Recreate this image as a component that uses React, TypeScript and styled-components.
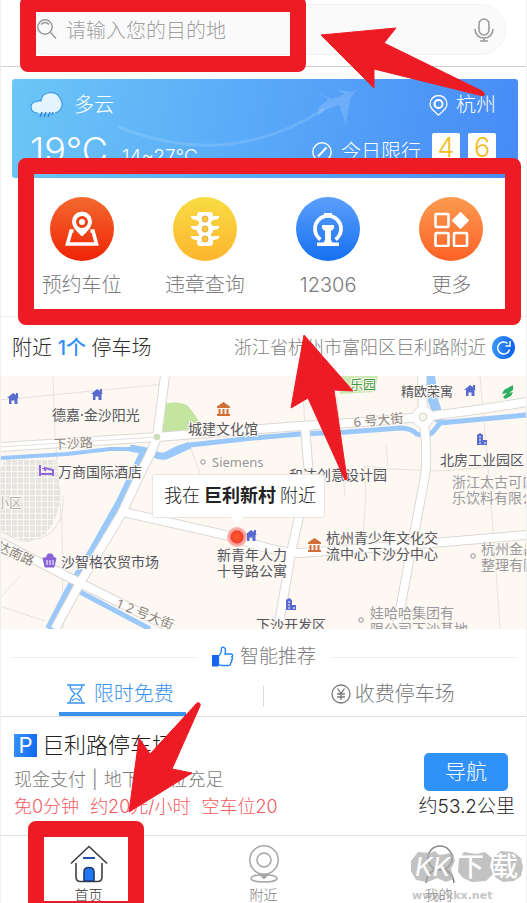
import React from "react";
import styled, { createGlobalStyle } from "styled-components";

const GlobalStyle = createGlobalStyle`
  * { box-sizing: border-box; }
  body {
    margin: 0;
    background: #fff;
    font-family: Inter, "Noto Sans CJK SC", sans-serif;
    font-weight: 300;
    color: #2b2b2b;
  }
  button, input { font: inherit; color: inherit; }
  button { border: 0; background: none; padding: 0; cursor: pointer; }
  a { color: inherit; text-decoration: none; }
  svg { display: block; flex: none; }
`;

const Page = styled.div`
  position: relative;
  overflow: hidden;
  background: #fff;
  border-left: 1px solid #efefef;
  border-right: 1px solid #efefef;
`;

/* ---------- search ---------- */

const SearchHeader = styled.header`
  padding: 4px 20px 11px;
  border-bottom: 1px solid #cfcdd0;
`;

const SearchBox = styled.label`
  display: flex;
  align-items: center;
  height: 51px;
  padding: 0 11px 0 15px;
  gap: 9px;
  border: 1px solid #f2f2f2;
  border-radius: 26px;
  background: #fafafa;
`;

const SearchInput = styled.input`
  flex: 1;
  min-width: 0;
  border: 0;
  outline: 0;
  padding: 2px 0 0;
  background: transparent;
  font-size: 20px;
  line-height: 28px;
  &::placeholder { color: #a0a0a0; opacity: 1; }
`;

/* ---------- weather ---------- */

const WeatherCard = styled.section`
  position: relative;
  overflow: hidden;
  margin: 12px 8px 0 11px;
  height: 99px;
  padding: 10px 22px 0 18px;
  border-radius: 3px;
  color: #fff;
  background: linear-gradient(100deg, #6cc6f6 0%, #5aabf8 45%, #478bf6 100%);
`;

const WeatherArt = styled.svg`
  position: absolute;
  top: 0;
  right: 0;
`;

const WeatherRow = styled.div<{ $tall?: boolean }>`
  position: relative;
  display: flex;
  align-items: ${(p) => (p.$tall ? "flex-start" : "center")};
  justify-content: space-between;
  height: ${(p) => (p.$tall ? 46 : 32)}px;
  margin-top: ${(p) => (p.$tall ? 10 : 0)}px;
`;

const WeatherGroup = styled.div<{ $gap: number }>`
  display: flex;
  align-items: center;
  gap: ${(p) => p.$gap}px;
  font-size: 20px;
  line-height: 32px;
`;

const Temperature = styled.div`
  display: flex;
  align-items: baseline;
  gap: 14px;
  font-size: 36px;
  line-height: 38px;
`;

const TemperatureRange = styled.span`
  font-size: 19px;
`;

const LimitGroup = styled.div`
  display: flex;
  gap: 8px;
  align-items: flex-start;
`;

const LimitLabel = styled.div`
  display: flex;
  align-items: center;
  gap: 9px;
  margin-right: 3px;
  padding-top: 5px;
  font-size: 20px;
  line-height: 32px;
`;

const LimitDigit = styled.span`
  width: 28px;
  height: 34px;
  margin-top: 2px;
  border-radius: 2px;
  background: #fff;
  color: #f2bd24;
  font-size: 27px;
  line-height: 29px;
  text-align: center;
`;

/* ---------- quick actions ---------- */

const QuickActions = styled.nav`
  display: grid;
  grid-template-columns: repeat(4, 1fr);
  padding: 19px 13px 17px 19px;
  border-bottom: 1px dotted #e4e4e4;
`;

const QuickAction = styled.button`
  display: flex;
  flex-direction: column;
  align-items: center;
  gap: 10px;
  color: #7c7c7c;
  font-size: 20px;
  line-height: 28px;
`;

const ActionDisc = styled.span<{ $from: string; $to: string }>`
  display: grid;
  place-items: center;
  width: 64px;
  height: 64px;
  border-radius: 50%;
  background: linear-gradient(${(p) => p.$from}, ${(p) => p.$to});
`;

/* ---------- nearby ---------- */

const NearbyBar = styled.div`
  display: flex;
  align-items: center;
  justify-content: space-between;
  height: 59px;
  padding: 2px 11px 0 11px;
`;

const NearbyCount = styled.h2`
  margin: 0;
  font-size: 20px;
  font-weight: 300;
  line-height: 28px;
  em { font-style: normal; font-weight: 500; color: #2f8ef5; }
`;

const Address = styled.div`
  display: flex;
  align-items: center;
  gap: 6px;
  color: #808080;
  font-size: 18px;
  line-height: 28px;
`;

const RefreshButton = styled.button`
  display: grid;
  place-items: center;
  width: 23px;
  height: 23px;
  border-radius: 50%;
  color: #fff;
  background: linear-gradient(100deg, #3c9bf8, #0a5cf0);
`;

/* ---------- map ---------- */

const MapPane = styled.section`
  position: relative;
  height: 253px;
  overflow: hidden;
  background: #fdf8f2;
`;

const MapSvg = styled.svg`
  width: 100%;
  height: 100%;
`;

const MapText = styled.text<{ $tone?: string; $small?: boolean }>`
  font-family: "Noto Sans", "Noto Sans CJK SC", sans-serif;
  font-size: ${(p) => (p.$small ? 13 : 14)}px;
  font-weight: 400;
  fill: ${(p) => p.$tone ?? "#55555d"};
  stroke: #fdf8f2;
  stroke-width: 2px;
  paint-order: stroke;
`;

const LocationBubble = styled.div`
  position: absolute;
  left: 151px;
  top: 98px;
  display: flex;
  gap: 4px;
  padding: 7px 8px 7px 11px;
  border-radius: 3px;
  background: #fff;
  border: 1px solid #e9e6e2;
  color: #222;
  font-size: 18px;
  line-height: 28px;
  white-space: nowrap;
  b { font-weight: 700; }
  &::after {
    content: "";
    position: absolute;
    left: 77px;
    bottom: -6px;
    border: 7px solid transparent;
    border-top-color: #fff;
    border-bottom: 0;
  }
`;

/* ---------- recommendation ---------- */

const SectionHeading = styled.div`
  display: flex;
  align-items: center;
  justify-content: center;
  padding: 14px 11px 5px 11px;
  gap: 16px;
  &::before, &::after {
    content: "";
    flex: 1;
    height: 1px;
    background: #ececec;
  }
`;

const HeadingText = styled.h3`
  display: flex;
  align-items: center;
  gap: 6px;
  margin: 0;
  color: #7a7a7a;
  font-size: 19px;
  font-weight: 300;
  line-height: 28px;
`;

const Tabs = styled.div`
  display: grid;
  grid-template-columns: 1fr 1fr;
  height: 41px;
  border-bottom: 1px solid #dedede;
`;

const TabCell = styled.div<{ $divided?: boolean }>`
  position: relative;
  display: flex;
  justify-content: center;
  padding-right: ${(p) => (p.$divided ? 20 : 0)}px;
  &::after {
    content: "";
    display: ${(p) => (p.$divided ? "block" : "none")};
    position: absolute;
    right: 0;
    top: 10px;
    width: 1px;
    height: 21px;
    background: #dcdcdc;
  }
`;

const Tab = styled.button<{ $active?: boolean }>`
  display: flex;
  align-items: center;
  gap: ${(p) => (p.$active ? 9 : 4)}px;
  height: 40px;
  padding: 0 12px 0 8px;
  border-bottom: 4px solid ${(p) => (p.$active ? "#3b93f0" : "transparent")};
  color: ${(p) => (p.$active ? "#3b93f0" : "#7a7a7a")};
  font-size: 20px;
  line-height: 28px;
`;

const Listing = styled.article`
  display: flex;
  align-items: flex-end;
  justify-content: space-between;
  padding: 13px 11px 14px 13px;
`;

const ListingTitle = styled.h3`
  display: flex;
  align-items: center;
  gap: 5px;
  margin: 0 0 7px;
  color: #222;
  font-size: 22px;
  font-weight: 300;
  line-height: 30px;
`;

const ParkingBadge = styled.span`
  width: 23px;
  height: 23px;
  background: linear-gradient(100deg, #3793f8, #0f66f2);
  color: #fff;
  font-size: 22px;
  font-weight: 400;
  line-height: 23px;
  text-align: center;
`;

const ListingMeta = styled.p`
  display: flex;
  gap: 6px;
  margin: 0;
  color: #7a7a7a;
  font-size: 18px;
  line-height: 26px;
`;

const ParkingKind = styled.span`
  display: flex;
  gap: 12px;
`;

const ListingPrice = styled.p`
  display: flex;
  gap: 11px;
  margin: 0;
  color: #f4595f;
  font-size: 18px;
  line-height: 28px;
`;

const ListingSide = styled.div`
  display: flex;
  flex-direction: column;
  align-items: flex-end;
  gap: 2px;
  font-size: 19px;
  line-height: 28px;
`;

const NavigateButton = styled.button`
  width: 84px;
  height: 38px;
  margin-right: 7px;
  border-radius: 5px;
  background: #3092f9;
  color: #fff;
  font-size: 21px;
  line-height: 28px;
`;

/* ---------- bottom bar ---------- */

const BottomBar = styled.nav`
  display: grid;
  grid-template-columns: repeat(3, 1fr);
  padding-top: 9px;
  border-top: 1px solid #e2e2e2;
`;

const BottomLink = styled.a<{ $active?: boolean }>`
  display: flex;
  flex-direction: column;
  align-items: center;
  gap: 4px;
  color: ${(p) => (p.$active ? "#333" : "#808080")};
  font-size: 14px;
  line-height: 16px;
`;

const Watermark = styled.div`
  position: absolute;
  right: 2px;
  bottom: 0;
  width: 114px;
  height: 54px;
`;

const WatermarkBlobs = styled.svg`
  position: absolute;
  left: 0;
  top: 0;
`;

const WatermarkName = styled.div`
  position: relative;
  display: flex;
  gap: 8px;
  padding-left: 5px;
  color: #fff;
  font-size: 26px;
  font-weight: 500;
  line-height: 36px;
  i { font-weight: 400; }
`;

const WatermarkUrl = styled.div`
  position: relative;
  padding: 4px 0 0 2px;
  color: rgba(170, 170, 170, 0.7);
  font-family: "DejaVu Sans", sans-serif;
  font-size: 11px;
  font-weight: 700;
  line-height: 14px;
`;

/* ---------- red annotations laid over the screen ---------- */

const Frame = styled.div<{ $x: number; $y: number; $w: number; $h: number }>`
  position: absolute;
  left: ${(p) => p.$x}px;
  top: ${(p) => p.$y}px;
  width: ${(p) => p.$w}px;
  height: ${(p) => p.$h}px;
  border: 16px solid #ed1c24;
  border-radius: 8px;
  pointer-events: none;
`;

const Arrows = styled.svg`
  position: absolute;
  left: -1px;
  top: 0;
  pointer-events: none;
`;

/* ---------- icons ---------- */

const SearchIcon = () => (
  <svg width="20" height="21" viewBox="0 0 20 21" fill="none" stroke="#999" strokeWidth="1.5">
    <circle cx="8" cy="8" r="7.2" />
    <path d="M4 5.5Q8 1.500 12 5.500M13.500 13.500L19 19.500" />
  </svg>
);

const MicIcon = () => (
  <svg width="20" height="24" viewBox="0 0 20 24" fill="none" stroke="#9b9b9b" strokeWidth="1.600">
    <rect x="5" y="1" width="10" height="16" rx="5" />
    <path d="M1 11c0 5.500 4 9 9 9s9-3.500 9-9M10 20v3M6 23h8" />
  </svg>
);

const CloudIcon = () => (
  <svg width="33" height="26" viewBox="0 0 33 26">
    <path d="M7 21C-1 20-1 10 7 9.500 9 8 10 9 11 9 12-1 26-2 30 6c5 8 0 15-7 15z" fill="#e4f5ff" stroke="#3f9be6" strokeWidth="1.200" />
    <path d="M8 20h17" stroke="#e4f5ff" strokeWidth="3" />
    <path d="M12 20l-2 5M16 20l-2 5M20 20l-2 5M23 20l-1 3" stroke="#2e86d8" strokeWidth="1.600" />
  </svg>
);

const CityPinIcon = () => (
  <svg width="19" height="21" viewBox="0 0 19 21" fill="none" stroke="#fff" strokeWidth="1.300">
    <path d="M9.500 20C6 17 1 14 1 9a8.500 8.500 0 0 1 17 0c0 5-5 8-8.500 11z" />
    <circle cx="9.500" cy="9" r="4" strokeWidth="2" />
  </svg>
);

const BanIcon = () => (
  <svg width="20" height="20" viewBox="0 0 20 20" fill="none" stroke="#fff" strokeWidth="1.400">
    <circle cx="10" cy="10" r="9.200" />
    <path d="M6 14.500L14.500 5.500" strokeWidth="2" />
  </svg>
);

const ReserveIcon = () => (
  <svg width="34" height="36" viewBox="0 0 34 36" fill="none">
    <path d="M8.500 20H6L2.500 33h29L28 20h-2.500" stroke="#fff" strokeWidth="3.600" />
    <path d="M17 26C13 22 6.500 17 6.500 10.500a10.500 10.500 0 0 1 21 0C27.500 17 21 22 17 26z" fill="#fff" stroke="#ee4414" />
    <circle cx="17" cy="11" r="4.500" fill="#fff" stroke="#ee4414" strokeWidth="3" />
  </svg>
);

const TrafficIcon = () => (
  <svg width="32" height="36" viewBox="0 0 32 36" fill="#fff">
    <path d="M10 1h12l2 2v6l-2 2v2l2 2v6l-2 2v2l2 2v6l-2 2H10l-2-2v-6l2-2v-2l-2-2v-6l2-2v-2L8 9V3z" />
    {[5, 15, 25].map((y) => (
      <path key={y} d={`M1.500 ${y}H30.500L29 ${y + 3}L23 ${y + 4.5}H9L3 ${y + 3}z`} />
    ))}
    {[8, 18, 28].map((y) => (
      <circle key={y} cx="16" cy={y} r="3" fill="#fccb45" stroke="#dfa92f" />
    ))}
  </svg>
);

const RailIcon = () => (
  <svg width="34" height="36" viewBox="0 0 34 36">
    <path d="M9.500 28.500A13 13 0 1 1 24.500 28.500" fill="none" stroke="#fff" strokeWidth="3.800" />
    <path d="M13 2h8v4h-8zM11 14h12v3.500L20 20v9l1.500 2.500H28V35H6v-3.500h6.500L14 29v-9l-3-2.500z" fill="#fff" />
  </svg>
);

const MoreIcon = () => (
  <svg width="36" height="36" viewBox="0 0 36 36" fill="none" stroke="#fff" strokeWidth="2.600">
    <rect x="2.500" y="3" width="13" height="13" rx="1" />
    <rect x="2.500" y="22" width="13" height="13" rx="1" />
    <rect x="21" y="22" width="13" height="13" rx="1" />
    <path d="M27.500 2.500l7 7-7 7-7-7z" fill="#fff" />
  </svg>
);

const RefreshIcon = () => (
  <svg width="16" height="16" viewBox="0 0 16 16" fill="none" stroke="#fff" strokeWidth="1.500">
    <path d="M13.500 9.500A6 6 0 1 1 11.500 3.300M14 1v5H9.500" />
  </svg>
);

const ThumbIcon = () => (
  <svg width="23" height="22" viewBox="0 0 23 22">
    <path d="M7.500 10c3-2 3-5 3-8 1-2 4-.5 4 2.500 0 1.500-.5 3-.5 3.500h6c2 0 2 2.500.8 3 1.200.8.8 2.600-.4 3 .8 1 .4 2.400-.8 2.800.5 1.400-.4 2.700-1.800 2.700H11c-1.500 0-2-.8-3.500-.8z" fill="#fff" stroke="#2383f4" strokeWidth="1.400" />
    <path d="M1 9h6.500v11.500H1z" fill="#1765ea" />
  </svg>
);

const HourglassIcon = () => (
  <svg width="18" height="20" viewBox="0 0 18 20" fill="none" stroke="#3b93f0" strokeWidth="1.400">
    <path d="M0 1h18M0 19h18M3 1c0 5 2.500 6.500 5 9-2.500 2.500-5 4-5 9M15 1c0 5-2.500 6.500-5 9 2.500 2.500 5 4 5 9" />
    <path d="M5 5h8M5 17c1-3 7-3 8 0" strokeWidth="1.200" />
  </svg>
);

const YenIcon = () => (
  <svg width="20" height="20" viewBox="0 0 20 20" fill="none" stroke="#7a7a7a" strokeWidth="1.300">
    <circle cx="10" cy="10" r="9" />
    <path d="M6.500 4.500L10 9.500l3.500-5M10 9.500V16M6 10h8M6 13h8" />
  </svg>
);

const HomeIcon = () => (
  <svg width="38" height="38" viewBox="0 0 38 38" fill="none" stroke="#3b3f45" strokeWidth="1.600">
    <path d="M1 18.500L19 1.500l18 17" />
    <path d="M6 18v14q0 4.500 4.500 4.500h17Q32 36.500 32 32V18" />
    <path d="M14 36V27q0-4.500 5-4.500t5 4.500v9z" fill="#2277f5" stroke="#223a70" />
    <path d="M13 13h12" stroke="#244ea8" strokeWidth="2" />
  </svg>
);

const NearIcon = () => (
  <svg width="32" height="38" viewBox="0 0 32 38" fill="none" stroke="#a5a5a5" strokeWidth="1.500">
    <circle cx="16" cy="15" r="14.200" />
    <circle cx="16" cy="15" r="7" />
    <path d="M12 30c-5 0-9 1.500-9 3.500S8 37 16 37s13-1.500 13-3.500-4-3.500-9-3.500" />
    <path d="M12 29.500h8l-4 4z" fill="#a5a5a5" />
  </svg>
);

const UserIcon = () => (
  <svg width="32" height="38" viewBox="0 0 32 38" fill="none" stroke="#858585" strokeWidth="1.500">
    <circle cx="17" cy="13" r="12" />
    <path d="M3 38c0-6 3-10 8-13M31 38c0-6-3-10-8-13" />
  </svg>
);

/* ---------- map drawing ---------- */

type Spot = { x: number; y: number };

const House = ({ x, y }: Spot) => (
  <g transform={`translate(${x} ${y})`} fill="#5a6bd0">
    <path d="M0 6l6-5 3 2V1h2v4l1 1H10.500v6H7.500V8.500h-3V12H2V6z" />
  </g>
);

const Temple = ({ x, y }: Spot) => (
  <g transform={`translate(${x} ${y})`} fill="#cf6f35">
    <path d="M6.500 0L13 4.500V6H0V4.500zM1.500 7h2v5h-2zM5.500 7h2v5h-2zM9.500 7h2v5h-2zM0 12h13v2H0z" />
  </g>
);

const Tower = ({ x, y }: Spot) => (
  <g transform={`translate(${x} ${y})`}>
    <path d="M1 12V2l3-2 3 2v5h4v5z" fill="#5a6bd0" />
    <path d="M3 4h2M3 7h2M3 10h2M8 10h2" stroke="#fff" />
  </g>
);

const roads = [
  "M0 71L157 61L300 50L350 47L423 41Q480 34 527 26",
  "M165 0L157 61Q152 76 143 92L122 137L80 207L55 253",
  "M123 136L230 160Q275 177 300 177Q400 170 527 159",
  "M305 50L309 100Q300 135 291 177L278 253",
  "M422 0L423 41Q429 80 424 105L400 234L396 253",
  "M0 166L80 207L173 253",
];

const lanes = [
  "M53 0L55 60L62 150L63 253", "M0 24L165 8", "M302 0L305 50", "M190 70L200 98M337 20L345 120",
  "M362 170L366 120L364 90L390 93L440 95L527 88", "M480 0L488 90L495 180L500 253", "M0 230L45 245",
  "M386 69L388 90M63 120Q66 165 20 165L0 155", "M20 200L0 222",
];

const MapDrawing = () => (
  <MapSvg viewBox="1 0 525 253" preserveAspectRatio="xMinYMid slice" aria-label="附近地图">
    <defs>
      <pattern id="blocks" width="6" height="6" patternUnits="userSpaceOnUse">
        <rect width="5" height="5" fill="#e6e4e1" />
      </pattern>
      <radialGradient id="dot">
        <stop offset="0" stopColor="#ff5a2a" />
        <stop offset="0.600" stopColor="#f0432f" />
        <stop offset="0.700" stopColor="#f79a94" />
        <stop offset="1" stopColor="#f9bcb6" />
      </radialGradient>
    </defs>
    <path d="M5 84L55 84L60 110Q62 140 45 158L28 166L0 156V95z" fill="url(#blocks)" />
    <path d="M162 28Q180 24 188 30Q198 42 204 54L160 59z" fill="#c4e5a0" />
    <path d="M335 0H378L375 16L340 18z" fill="#cfe9b4" />
    <g fill="none" stroke="#e6e2dc" strokeWidth="1">
      {lanes.map((d) => <path key={d} d={d} />)}
    </g>
    <g fill="none" stroke="#9ac8fb">
      <path d="M0 82L67 78L110 73L142 73" strokeWidth="4" />
      <path d="M145 74L120 126L93 174L69 214L49 253" strokeWidth="8" />
      <path d="M130 72L147 75M154 78Q162 82 168 79L190 69" strokeWidth="7" />
      <path d="M165 79Q180 70 190 69L253 62L300 58L347 56L400 52Q411 52 417 58Q425 61 432 57Q437 51 440 47L527 39" strokeWidth="5" />
      <path d="M430 0L433 24L440 45" strokeWidth="10" />
      <path d="M80 216L150 253" strokeWidth="5" />
    </g>
    <g fill="none" stroke="#dcd9d4" strokeWidth="10">
      {roads.map((d) => <path key={d} d={d} />)}
    </g>
    <circle cx="423" cy="41" r="11" fill="#fff" stroke="#dcd9d4" />
    <g fill="none" stroke="#fff" strokeWidth="8">
      {roads.map((d) => <path key={d} d={d} />)}
    </g>
    <path d="M0 71L157 61" stroke="#e4e1dc" />
    <circle cx="423" cy="41" r="4" fill="#f3f6ec" stroke="#d9d6d0" />
    <circle cx="157" cy="61" r="3" fill="#c9dfb0" stroke="#d9d6d0" />

    <House x={7} y={16} />
    <House x={91} y={12} />
    <House x={464} y={8} />
    <House x={245} y={153} />
    <Temple x={217} y={26} />
    <Temple x={308} y={162} />
    <Tower x={476} y={57} />
    <Tower x={285} y={222} />
    <path d="M40 89v11M40 98h13v-4l-8-2v3M53 100v-4M43 92v1" fill="none" stroke="#9264dc" strokeWidth="2" />
    <path d="M43 182h13l-2 9H45zM46 182l2-4h4l2 4" fill="#8a62d8" stroke="#8a62d8" />
    <path d="M47 184v5M50 184v5M53 184v5" stroke="#fff" />
    <path d="M513 9l-9 5-2 4 5-1-4 4 2 2 6-3 2-4-4 1 4-3z" fill="#2fae62" />
    {[[203, 86], [473, 180], [361, 244]].map(([cx, cy]) => (
      <circle key={cx} cx={cx} cy={cy} r="2.200" fill="#fff" stroke="#8c8c8c" />
    ))}

    <MapText x="52" y="44">德嘉·金沙阳光</MapText>
    <MapText $small $tone="#8a857e" transform="translate(54 73) rotate(-3)">下沙路</MapText>
    <MapText x="58" y="101">万商国际酒店</MapText>
    <MapText x="188" y="58">城建文化馆</MapText>
    <MapText $small $tone="#999" x="212" y="91">Siemens</MapText>
    <MapText x="289" y="104">和达创意设计园</MapText>
    <MapText $small x="401" y="20">精欧荣寓</MapText>
    <MapText $small $tone="#3f9a3f" x="350" y="13">乐园</MapText>
    <MapText $small $tone="#8a857e" transform="translate(354 51) rotate(-5)">6 号大街</MapText>
    <MapText x="440" y="89">北房工业园区</MapText>
    <MapText $tone="#9a9a9e" x="452" y="111">浙江太古可口</MapText>
    <MapText $tone="#9a9a9e" x="452" y="127">乐饮料有限公司</MapText>
    <MapText $small $tone="#b3b1ae" x="-4" y="131">小区</MapText>
    <MapText $small $tone="#8a857e" transform="translate(-4 174) rotate(24)">达南路</MapText>
    <MapText x="61" y="191">沙智格农贸市场</MapText>
    <MapText x="217" y="184">新青年人力</MapText>
    <MapText x="217" y="200">十号路公寓</MapText>
    <MapText x="256" y="254">下沙开发区</MapText>
    <MapText x="326" y="167">杭州青少年文化交</MapText>
    <MapText x="326" y="183">流中心下沙分中心</MapText>
    <MapText $tone="#9a9a9e" x="481" y="178">杭州金昌</MapText>
    <MapText $tone="#9a9a9e" x="481" y="194">整理有限</MapText>
    <MapText $tone="#9a9a9e" x="370" y="242">娃哈哈集团有</MapText>
    <MapText $tone="#9a9a9e" x="370" y="258">限公司下沙基地</MapText>
    <MapText $small $tone="#8a857e" transform="translate(115 231) rotate(22)">1 2 号大街</MapText>
    <circle cx="237" cy="161" r="10" fill="url(#dot)" />
  </MapSvg>
);

/* ---------- screen ---------- */

const actions = [
  { label: "预约车位", from: "#f4692f", to: "#ee2406", icon: <ReserveIcon /> },
  { label: "违章查询", from: "#f8dc42", to: "#fdb52e", icon: <TrafficIcon /> },
  { label: "12306", from: "#5c9ffa", to: "#1670f2", icon: <RailIcon /> },
  { label: "更多", from: "#fb9b50", to: "#fc6226", icon: <MoreIcon /> },
];

export default function App() {
  return (
    <>
      <GlobalStyle />
      <Page>
        <SearchHeader>
          <SearchBox>
            <SearchIcon />
            <SearchInput type="text" placeholder="请输入您的目的地" aria-label="目的地" />
            <MicIcon />
          </SearchBox>
        </SearchHeader>

        <WeatherCard>
          <WeatherArt width="400" height="99" viewBox="0 0 400 99" fill="none">
            <path d="M0 48Q110 92 206 30" stroke="#fff" strokeOpacity="0.130" strokeWidth="3" />
            <path d="M194 11l20 9 13-5-10-5 9 2 8 1 4-2-6 9-4 26-7-20-14 5-7 6 1-9 10-8z" fill="#fff" fillOpacity="0.150" />
          </WeatherArt>
          <WeatherRow>
            <WeatherGroup $gap={11}>
              <CloudIcon />
              多云
            </WeatherGroup>
            <WeatherGroup $gap={8}>
              <CityPinIcon />
              杭州
            </WeatherGroup>
          </WeatherRow>
          <WeatherRow $tall>
            <Temperature>
              19℃
              <TemperatureRange>14~27℃</TemperatureRange>
            </Temperature>
            <LimitGroup>
              <LimitLabel>
                <BanIcon />
                今日限行
              </LimitLabel>
              <LimitDigit>4</LimitDigit>
              <LimitDigit>6</LimitDigit>
            </LimitGroup>
          </WeatherRow>
        </WeatherCard>

        <QuickActions>
          {actions.map((a) => (
            <QuickAction key={a.label} type="button">
              <ActionDisc $from={a.from} $to={a.to}>{a.icon}</ActionDisc>
              {a.label}
            </QuickAction>
          ))}
        </QuickActions>

        <NearbyBar>
          <NearbyCount>附近 <em>1个</em> 停车场</NearbyCount>
          <Address>
            浙江省杭州市富阳区巨利路附近
            <RefreshButton type="button" aria-label="刷新位置"><RefreshIcon /></RefreshButton>
          </Address>
        </NearbyBar>

        <MapPane>
          <MapDrawing />
          <LocationBubble>
            <span>我在</span>
            <b>巨利新村</b>
            <span>附近</span>
          </LocationBubble>
        </MapPane>

        <SectionHeading>
          <HeadingText><ThumbIcon />智能推荐</HeadingText>
        </SectionHeading>

        <Tabs>
          <TabCell $divided>
            <Tab type="button" $active><HourglassIcon />限时免费</Tab>
          </TabCell>
          <TabCell>
            <Tab type="button"><YenIcon />收费停车场</Tab>
          </TabCell>
        </Tabs>

        <Listing>
          <div>
            <ListingTitle><ParkingBadge>P</ParkingBadge>巨利路停车场</ListingTitle>
            <ListingMeta>
              <span>现金支付</span>
              <span>|</span>
              <ParkingKind>
                <span>地下</span>
                <span>车位充足</span>
              </ParkingKind>
            </ListingMeta>
            <ListingPrice>
              <span>免0分钟</span>
              <span>约20元/小时</span>
              <span>空车位20</span>
            </ListingPrice>
          </div>
          <ListingSide>
            <NavigateButton type="button">导航</NavigateButton>
            约53.2公里
          </ListingSide>
        </Listing>

        <BottomBar>
          <BottomLink href="#home" $active><HomeIcon />首页</BottomLink>
          <BottomLink href="#near"><NearIcon />附近</BottomLink>
          <BottomLink href="#mine"><UserIcon />我的</BottomLink>
        </BottomBar>

        <Watermark>
          <WatermarkBlobs width="114" height="36" viewBox="0 0 114 36" fill="#a8a8a8" fillOpacity="0.700">
            <path d="M1 12L8 3l12 1 5-2 4 4 14-2 2 8-4 8 3 10-8 3-9-4-9 4-12-2-5-9z" />
            <path d="M49 10l5-7 12 2 9-2 7 6-2 8 3 8-7 7-14 1-9-4-5-6z" />
            <path d="M84 8l7-6 12 1 8 6 2 9-2 9-7 5-11 1-8-5-2-10z" />
          </WatermarkBlobs>
          <WatermarkName><i>KK</i><span>下</span><span>载</span></WatermarkName>
          <WatermarkUrl>www.kkx.net</WatermarkUrl>
        </Watermark>

        <Frame $x={19} $y={-4} $w={286} $h={76} />
        <Frame $x={17} $y={158} $w={503} $h={167} />
        <Frame $x={27} $y={821} $w={116} $h={96} />
        <Arrows width="527" height="903" viewBox="0 0 527 903" fill="#ed1c24" stroke="#ed1c24" strokeLinejoin="round">
          <path d="M321 35L396 28L384 43L482 91Q486 94 483 96L374 69V88z" />
          <path d="M304 335L353 391L334 390L347 479L345 480L308 398L291 408z" />
          <path d="M129 812L139 738L150 754L197 703Q201 702 200 706L172 769L192 773z" />
        </Arrows>
      </Page>
    </>
  );
}
